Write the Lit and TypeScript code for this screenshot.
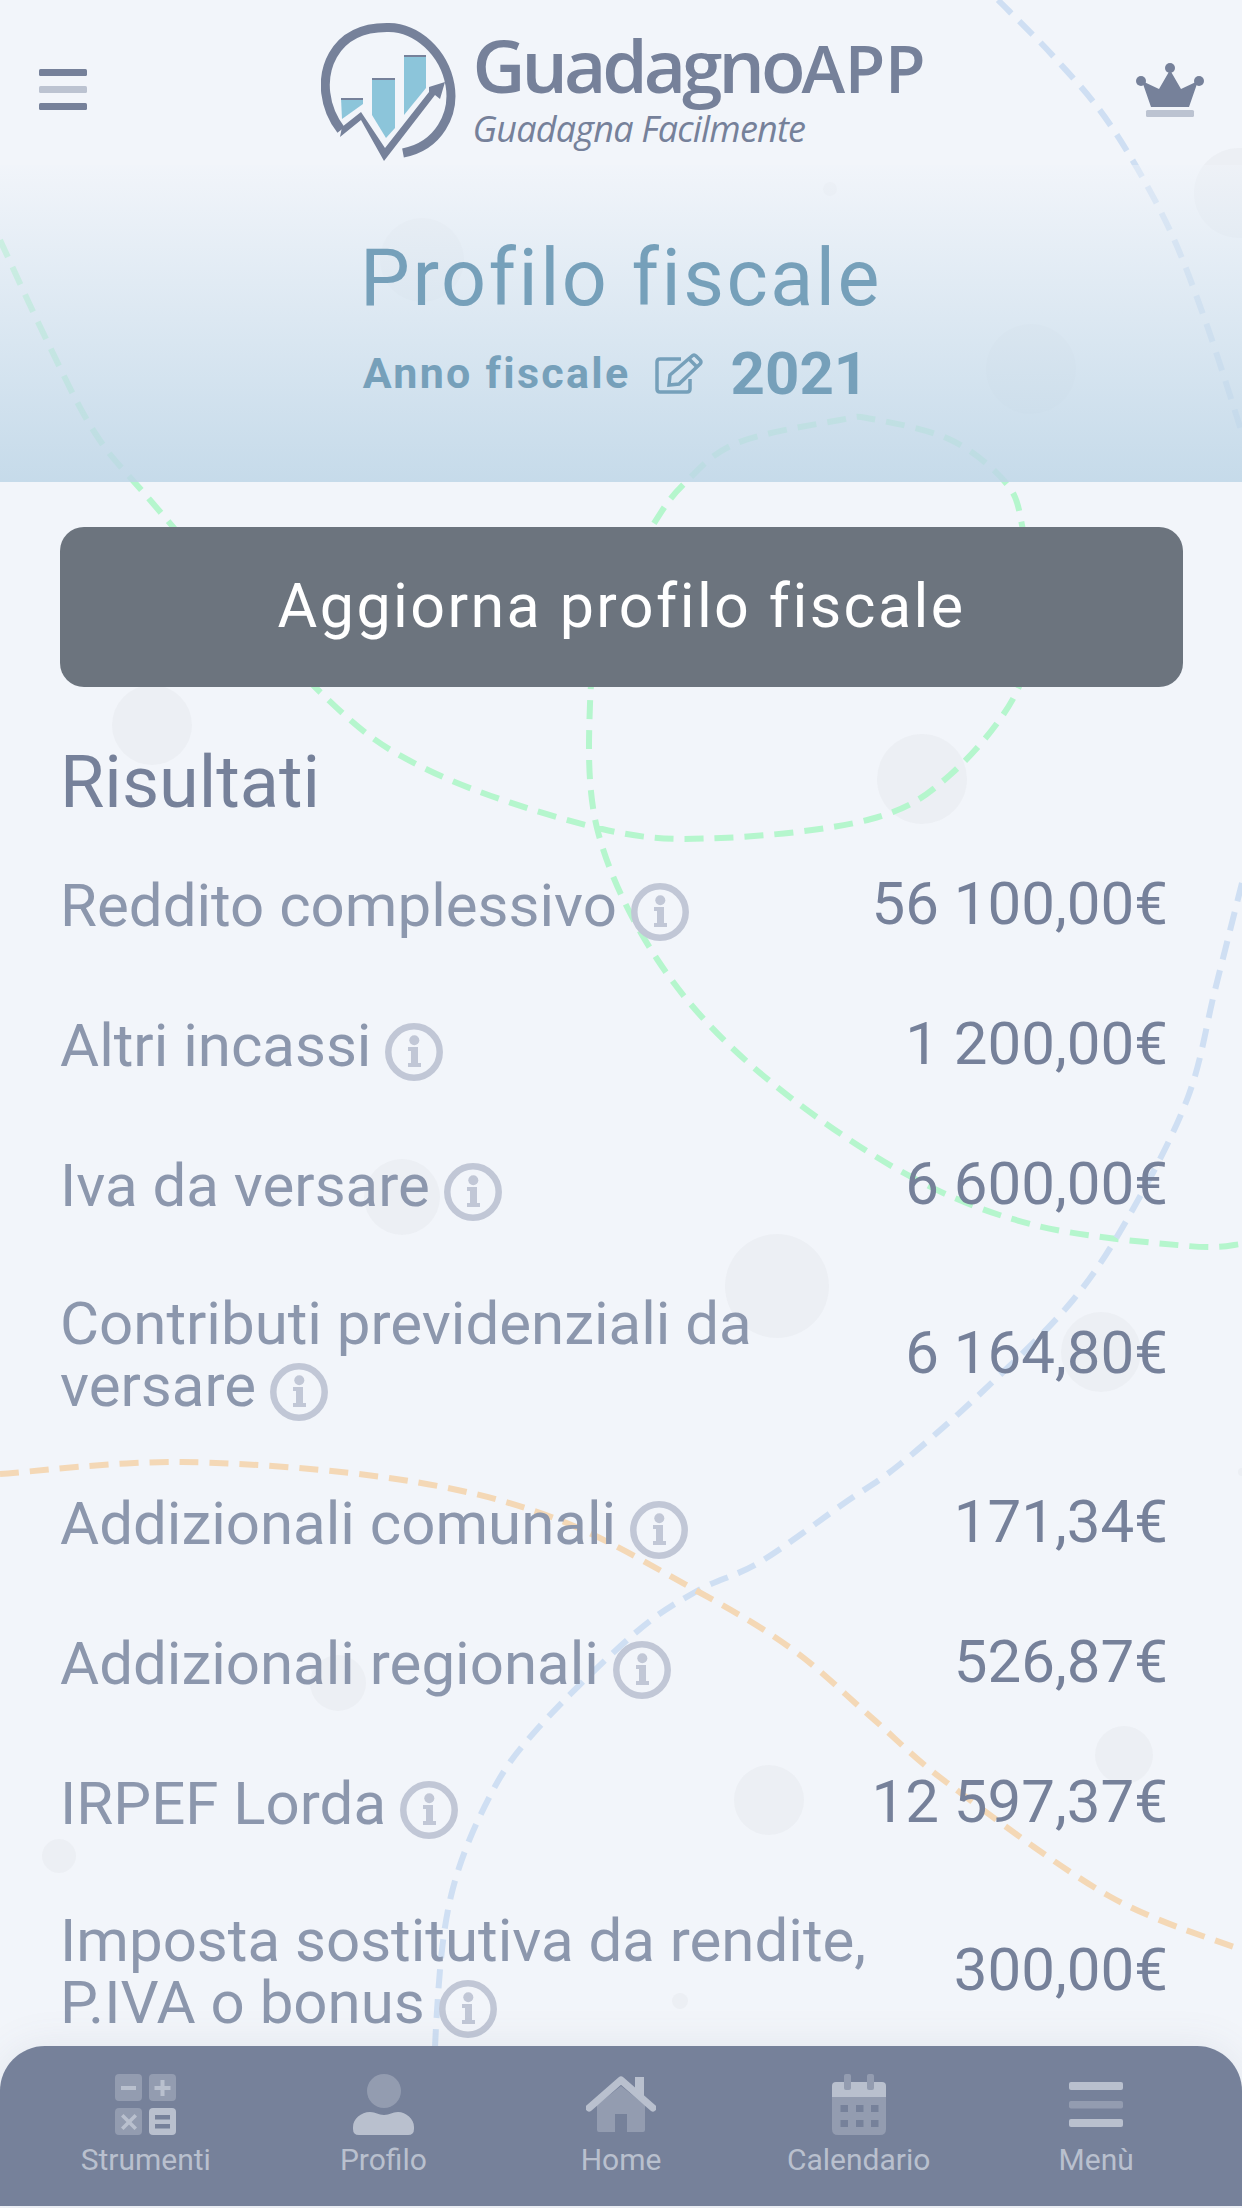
import { LitElement, html, css, svg } from "lit";
import { customElement } from "lit/decorators.js";

type P = [number, number];
function spline(pts: P[]): string {
  let d = `M${pts[0][0]} ${pts[0][1]}`;
  for (let i = 0; i < pts.length - 1; i++) {
    const p0 = pts[Math.max(i - 1, 0)], p1 = pts[i], p2 = pts[i + 1], p3 = pts[Math.min(i + 2, pts.length - 1)];
    const c1x = p1[0] + (p2[0] - p0[0]) / 6, c1y = p1[1] + (p2[1] - p0[1]) / 6;
    const c2x = p2[0] - (p3[0] - p1[0]) / 6, c2y = p2[1] - (p3[1] - p1[1]) / 6;
    d += ` C${c1x.toFixed(1)} ${c1y.toFixed(1)} ${c2x.toFixed(1)} ${c2y.toFixed(1)} ${p2[0]} ${p2[1]}`;
  }
  return d;
}

const GREEN: P[] = [[0,240],[48,343],[95,433],[150,500],[317,689],[428,770],[602,829],[721,838],[871,819],[950,775],[1018,689],[1030,600],[1022,525],[1006,483],[951,440],[872,419],[840,420],[737,443],[685,483],[653,525],[606,610],[590,704],[598,832],[657,959],[752,1066],[895,1168],[1030,1224],[1188,1246],[1242,1244]];
const BLUE1: P[] = [[998,0],[1054,57],[1109,123],[1165,220],[1204,317],[1242,433]];
const BLUE2: P[] = [[1242,883],[1215,990],[1188,1097],[1133,1209],[1073,1300],[982,1392],[899,1465],[843,1504],[760,1562],[697,1591],[634,1634],[539,1727],[491,1794],[451,1896],[436,2027],[432,2208]];
const ORANGE: P[] = [[0,1474],[182,1462],[396,1479],[554,1518],[697,1591],[792,1649],[871,1717],[950,1785],[1109,1896],[1242,1950]];
const BLOBS: [number, number, number][] = [[152,725,40],[922,779,45],[422,260,42],[1239,193,45],[830,189,7],[1031,369,45],[402,1197,38],[777,1286,52],[1101,1352,40],[338,1683,28],[769,1800,35],[1124,1755,29],[59,1856,17],[680,2001,8],[1242,1472,4]];

const bg = svg`
  ${BLOBS.map(([x, y, r]) => svg`<circle cx=${x} cy=${y} r=${r} fill="#70787f" fill-opacity=".045"/>`)}
  <path d=${spline(GREEN)} fill="none" stroke="#b5f6cd" stroke-width="6" stroke-dasharray="19 11"/>
  <path d=${spline(BLUE1)} fill="none" stroke="#cfdff3" stroke-width="6" stroke-dasharray="19 11"/>
  <path d=${spline(BLUE2)} fill="none" stroke="#cfdff3" stroke-width="6" stroke-dasharray="19 11"/>
  <path d=${spline(ORANGE)} fill="none" stroke="#f4d8b6" stroke-width="6" stroke-dasharray="19 11"/>`;

const infoIcon = html`<svg class="info" viewBox="0 0 58 58" width="58" height="58">
  <circle cx="29" cy="29" r="25.7" fill="none" stroke="#c1c7d6" stroke-width="6.5"/>
  <circle cx="29.3" cy="17.3" r="5" fill="#c1c7d6"/>
  <path d="M23 24H33V40H36V44H23V40H26V28H23Z" fill="#c1c7d6"/></svg>`;

const rows: { label: string; value: string }[] = [
  { label: "Reddito complessivo", value: "56 100,00€" },
  { label: "Altri incassi", value: "1 200,00€" },
  { label: "Iva da versare", value: "6 600,00€" },
  { label: "Contributi previdenziali da versare", value: "6 164,80€" },
  { label: "Addizionali comunali", value: "171,34€" },
  { label: "Addizionali regionali", value: "526,87€" },
  { label: "IRPEF Lorda", value: "12 597,37€" },
  { label: "Imposta sostitutiva da rendite, P.IVA o bonus", value: "300,00€" },
];

const L = "#b9c0ce", D = "#939cb0", N = "#76819a";
const navIcons = [
  html`<svg viewBox="0 0 61 61" width="61" height="61">
    <rect width="27" height="27" rx="4" fill=${D}/><rect x="34" width="27" height="27" rx="4" fill=${D}/>
    <rect y="34" width="27" height="27" rx="4" fill=${D}/><rect x="34" y="34" width="27" height="27" rx="4" fill=${L}/>
    <rect x="6" y="12" width="15" height="4" fill=${L}/>
    <path d="M45.5 6h4v6h6v4h-6v6h-4v-6h-6v-4h6z" fill=${L}/>
    <path d="M8 42l5.500 5.500L19 42l2.500 2.500L16 50l5.500 5.500L19 58l-5.500-5.500L8 58l-2.500-2.500L11 50l-5.500-5.500z" fill=${L} transform="translate(.5 -2)"/>
    <rect x="40" y="41" width="15" height="4.500" fill=${N}/><rect x="40" y="50" width="15" height="4.500" fill=${N}/></svg>`,
  html`<svg viewBox="0 0 61 61" width="61" height="61">
    <circle cx="31" cy="17" r="17" fill=${D}/>
    <path d="M0 53C0 45 8 38 17 38C23 38 25 41 31 41C37 41 39 38 45 38C53 38 61 45 61 53V55Q61 61 55 61H6Q0 61 0 55Z" fill=${L}/></svg>`,
  html`<svg viewBox="0 0 70 61" width="70" height="61">
    <path d="M11 58V33L35 14L59 33V58Q59 60 57 60H41V42H29V60H13Q11 60 11 58Z" fill=${D} transform="translate(0 -2)"/>
    <path d="M3 34L35 6L67 34" fill="none" stroke=${L} stroke-width="7" stroke-linejoin="round" stroke-linecap="round"/>
    <rect x="49" y="3" width="9" height="20" fill=${L}/></svg>`,
  html`<svg viewBox="0 0 54 61" width="54" height="61">
    <path d="M0 23H54V55Q54 61 48 61H6Q0 61 0 55Z" fill=${D}/>
    <path d="M0 23V12Q0 8 4 8H50Q54 8 54 12V23Z" fill=${L}/>
    <rect x="12" y="0" width="7" height="16" rx="2" fill=${D}/><rect x="35" y="0" width="7" height="16" rx="2" fill=${D}/>
    ${[8.5, 24, 39].flatMap((x) => [31, 46].map((y) => svg`<rect x=${x} y=${y} width="7.500" height="7" fill=${N}/>`))}</svg>`,
  html`<svg viewBox="0 0 54 61" width="54" height="61">
    <rect y="8" width="54" height="8" rx="2" fill=${L}/><rect y="27" width="54" height="7.500" rx="2" fill=${D}/><rect y="45" width="54" height="8" rx="2" fill=${L}/></svg>`,
];
const navLabels = ["Strumenti", "Profilo", "Home", "Calendario", "Menù"];

@customElement("app-root")
export class AppRoot extends LitElement {
  static styles = css`
    :host { display: block; position: relative; width: 1242px; height: 2208px; overflow: hidden; background: #f2f5fa; font-family: Roboto, sans-serif; }
    .decor { position: absolute; inset: 0; width: 1242px; height: 2208px; }
    .page { position: relative; display: flex; flex-direction: column; }
    .top { height: 165px; box-sizing: border-box; padding: 16px 38px 0 39px; display: flex; justify-content: space-between; align-items: flex-start; }
    .burger { margin-top: 53px; }
    .crown { margin-top: 47px; }
    .logo { display: flex; margin-left: 23px; }
    .brand { display: flex; flex-direction: column; font-family: "Open Sans", sans-serif; color: #76819a; margin-left: 16px; }
    .brand .name { font-size: 73px; font-weight: 600; line-height: 74px; letter-spacing: -4px; margin-top: 12px; white-space: nowrap; }
    .brand .name span { font-size: 66px; letter-spacing: -.3px; }
    .brand .tag { font-size: 36px; font-style: italic; font-weight: 400; line-height: 44px; letter-spacing: -.8px; white-space: nowrap; margin-top: 3px; }
    .fiscal { height: 317px; background: linear-gradient(rgba(240,244,250,.45), rgba(190,214,231,.85)); display: flex; flex-direction: column; align-items: center; color: #76a0ba; }
    h1 { margin: 68px 0 0; font-size: 79px; line-height: 90px; font-weight: 400; letter-spacing: 2.5px; }
    .year { display: flex; align-items: center; margin: 20px 11px 0 0; height: 60px; }
    .year .lbl { font-size: 43px; font-weight: 700; letter-spacing: 2.3px; }
    .year svg { margin: 0 28px 0 24px; }
    .year .num { font-size: 60px; font-weight: 700; }
    .content { padding: 45px 59px 0 60px; }
    .cta { height: 160px; background: #6c747e; border-radius: 24px; color: #fff; font-size: 61px; letter-spacing: 2.4px; display: flex; align-items: center; justify-content: center; padding-bottom: 2px; box-sizing: border-box; }
    h2 { margin: 57px 0 14px; font-size: 72px; line-height: 78px; font-weight: 400; color: #76819a; }
    .row { display: flex; box-sizing: border-box; min-height: 140px; justify-content: space-between; align-items: center; padding: 36.75px 15px 36.75px 0; }
    .label { font-size: 60px; line-height: 62px; color: #8c97ad; flex: 0 1 830px; }
    .info { vertical-align: -9px; margin: -6px 0 -6px 14px; }
    .value { font-size: 60px; line-height: 62px; color: #76819a; white-space: nowrap; margin-top: -4px; }
    nav { position: absolute; left: 0; right: 0; bottom: 2px; height: 160px; box-sizing: border-box; padding: 28px 27px 0; background: #76819a; border-radius: 45px 45px 0 0; box-shadow: 0 0 40px rgba(90,100,120,.1); display: grid; grid-template-columns: repeat(5, 1fr); }
    .item { display: flex; flex-direction: column; align-items: center; color: #b9c0ce; font-size: 30px; line-height: 40px; }
    .item svg { display: block; margin-bottom: 5px; }
  `;

  render() {
    return html`
      <svg class="decor" viewBox="0 0 1242 2208">${bg}</svg>
      <div class="page">
        <header class="top">
          <svg class="burger" width="48" height="41" viewBox="0 0 48 41">
            <rect width="48" height="7" rx="1.500" fill="#76819a"/><rect y="17" width="48" height="7" rx="1.500" fill="#bcc3d1"/><rect y="34" width="48" height="7" rx="1.500" fill="#76819a"/></svg>
          <div class="logo">
            <svg width="136" height="146" viewBox="322 16 136 146">
              <path d="M342 130C325 108 321 78 334 55C346 34 366 27 390 27.500C418 28 445 52 451 85C456 114 440 146 404 153" fill="none" stroke="#76819a" stroke-width="9"/>
              <path d="M342 98H364V104L343 119Z" fill="#8cc5da"/><path d="M373 78H396V128L387 138L373 115Z" fill="#8cc5da"/><path d="M405 55H427V88L405 115Z" fill="#8cc5da"/>
              <path d="M342 98H364V100H342ZM373 78H396V80H373ZM405 55H427V57H405Z" fill="#76819a"/>
              <path d="M341 137L343 127L362 112L386 148L430 92L430 87L446 82L441 99L436 95L385 161L362 120Z" fill="#76819a"/>
            </svg>
            <div class="brand">
              <div class="name">Guadagno<span>APP</span></div>
              <div class="tag">Guadagna Facilmente</div>
            </div>
          </div>
          <svg class="crown" width="68" height="54" viewBox="0 0 68 54">
            <circle cx="34" cy="5" r="5" fill="#76819a"/><circle cx="5" cy="18" r="5" fill="#76819a"/><circle cx="63" cy="18" r="5" fill="#76819a"/>
            <path d="M34 7L45 26L62 18L53 44H15L6 18L23 26Z" fill="#76819a"/>
            <rect x="10" y="47" width="48" height="7" rx="1.500" fill="#bcc3d1"/></svg>
        </header>
        <section class="fiscal">
          <h1>Profilo fiscale</h1>
          <div class="year">
            <span class="lbl">Anno fiscale</span>
            <svg width="48" height="41" viewBox="0 0 48 41" fill="none" stroke="#76a0ba" stroke-width="3.500">
              <path d="M26 6H5Q2 6 2 9V36Q2 39 5 39H32Q35 39 35 36V26"/>
              <path d="M15 22L37 3Q39 1 41 3L45 7Q47 9 45 11L24 31L14 32Z"/><path d="M34 6L42 14"/></svg>
            <span class="num">2021</span>
          </div>
        </section>
        <main class="content">
          <div class="cta">Aggiorna profilo fiscale</div>
          <h2>Risultati</h2>
          ${rows.map((r) => html`<div class="row"><div class="label">${r.label}${infoIcon}</div><div class="value">${r.value}</div></div>`)}
        </main>
      </div>
      <nav>
        ${navLabels.map((l, i) => html`<div class="item">${navIcons[i]}<span>${l}</span></div>`)}
      </nav>
    `;
  }
}
